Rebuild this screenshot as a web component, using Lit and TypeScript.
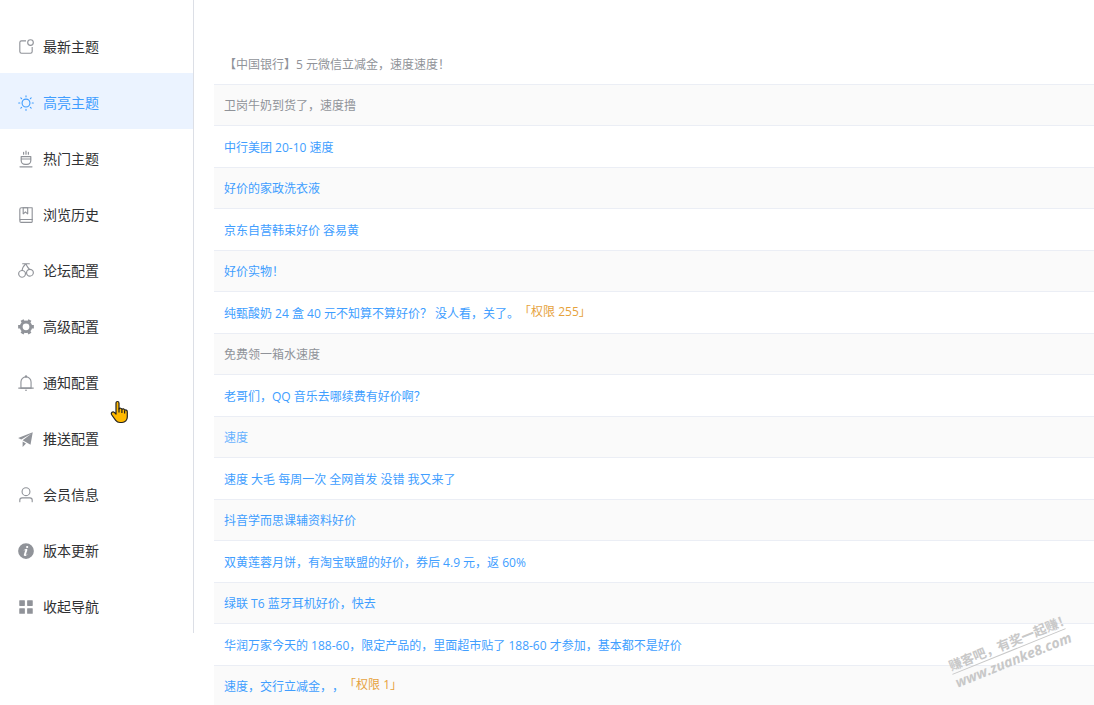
import { LitElement, html, css, svg } from "lit";
import { customElement, property, state } from "lit/decorators.js";
import { classMap } from "lit/directives/class-map.js";

const ICONS: Record<string, string[]> = {
  notification: [
    "M512 128v64H256a64 64 0 0 0-64 64v512a64 64 0 0 0 64 64h512a64 64 0 0 0 64-64V512h64v256a128 128 0 0 1-128 128H256a128 128 0 0 1-128-128V256a128 128 0 0 1 128-128h256z",
    "M768 384a128 128 0 1 0 0-256 128 128 0 0 0 0 256zm0 64a192 192 0 1 1 0-384 192 192 0 0 1 0 384z",
  ],
  sunny: [
    "M512 704a192 192 0 1 0 0-384 192 192 0 0 0 0 384zm0 64a256 256 0 1 1 0-512 256 256 0 0 1 0 512z",
    "M512 64a32 32 0 0 1 32 32v64a32 32 0 0 1-64 0V96a32 32 0 0 1 32-32zm0 768a32 32 0 0 1 32 32v64a32 32 0 1 1-64 0v-64a32 32 0 0 1 32-32z",
    "M195.2 195.2a32 32 0 0 1 45.248 0l45.248 45.248a32 32 0 1 1-45.248 45.248L195.2 240.448a32 32 0 0 1 0-45.248zm543.104 543.104a32 32 0 0 1 45.248 0l45.248 45.248a32 32 0 0 1-45.248 45.248l-45.248-45.248a32 32 0 0 1 0-45.248z",
    "M64 512a32 32 0 0 1 32-32h64a32 32 0 0 1 0 64H96a32 32 0 0 1-32-32zm768 0a32 32 0 0 1 32-32h64a32 32 0 1 1 0 64h-64a32 32 0 0 1-32-32z",
    "M195.2 828.8a32 32 0 0 1 0-45.248l45.248-45.248a32 32 0 0 1 45.248 45.248L240.448 828.8a32 32 0 0 1-45.248 0zM738.304 285.696a32 32 0 0 1 0-45.248l45.248-45.248a32 32 0 0 1 45.248 45.248l-45.248 45.248a32 32 0 0 1-45.248 0z",
  ],
  hot: [
    "M273.067 477.867h477.866V409.6H273.067v68.267zm0 68.266v51.2A187.733 187.733 0 0 0 460.8 785.067h102.4a187.733 187.733 0 0 0 187.733-187.734v-51.2H273.067zm-34.134-204.8h546.134a34.133 34.133 0 0 1 34.133 34.134v221.866a256 256 0 0 1-256 256H460.8a256 256 0 0 1-256-256V375.467a34.133 34.133 0 0 1 34.133-34.134zM512 34.133a34.133 34.133 0 0 1 34.133 34.134v170.666a34.133 34.133 0 0 1-68.266 0V68.267A34.133 34.133 0 0 1 512 34.133zM375.467 102.4a34.133 34.133 0 0 1 34.133 34.133v102.4a34.133 34.133 0 0 1-68.267 0v-102.4a34.133 34.133 0 0 1 34.134-34.133zm273.066 0a34.133 34.133 0 0 1 34.134 34.133v102.4a34.133 34.133 0 1 1-68.267 0v-102.4a34.133 34.133 0 0 1 34.133-34.133zM170.667 921.668h682.666a34.133 34.133 0 1 1 0 68.267H170.667a34.133 34.133 0 1 1 0-68.267z",
  ],
  collection: [
    "M192 736h640V128H256a64 64 0 0 0-64 64v544zm64-672h608a32 32 0 0 1 32 32v672a32 32 0 0 1-32 32H160l-32 57.536V192A128 128 0 0 1 256 64z",
    "M240 800a48 48 0 1 0 0 96h592v-96H240zm0-64h656v160a64 64 0 0 1-64 64H240a112 112 0 0 1 0-224zm144-608v250.88l96-76.8 96 76.8V128H384zm-64-64h320v381.44a32 32 0 0 1-51.968 24.96L480 384l-108.032 86.4A32 32 0 0 1 320 445.44V64z",
  ],
  cherry: [
    "M261.056 449.6c13.824-69.696 34.88-128.96 63.36-177.728 23.744-40.832 61.12-88.64 112.256-143.872H320a32 32 0 0 1 0-64h384a32 32 0 1 1 0 64H554.752c14.912 39.168 41.344 86.592 79.552 141.76 47.36 68.48 84.8 106.752 106.304 114.304a224 224 0 1 1-84.992 14.784c-22.656-22.912-47.04-53.76-73.92-92.608-38.848-56.128-67.008-105.792-84.352-149.312-55.296 58.24-94.528 107.52-117.76 147.2-23.168 39.744-41.088 88.768-53.568 147.072a224.064 224.064 0 1 1-64.96-1.6zM288 832a160 160 0 1 0 0-320 160 160 0 0 0 0 320zm448-64a160 160 0 1 0 0-320 160 160 0 0 0 0 320z",
  ],
  tools: [
    "M764.416 254.72a351.68 351.68 0 0 1 86.336 149.184H960v192.064H850.752a351.68 351.68 0 0 1-86.336 149.312l54.72 94.72-166.272 96-54.592-94.72a352.64 352.64 0 0 1-172.48 0L371.136 936l-166.272-96 54.72-94.72a351.68 351.68 0 0 1-86.336-149.312H64v-192h109.248a351.68 351.68 0 0 1 86.336-149.312L204.8 160l166.208-96h.192l54.656 94.592a352.64 352.64 0 0 1 172.48 0L652.8 64h.128L819.2 160l-54.72 94.72zM704 499.968a192 192 0 1 0-384 0 192 192 0 0 0 384 0z",
  ],
  bell: [
    "M512 64a64 64 0 0 1 64 64v64H448v-64a64 64 0 0 1 64-64z",
    "M256 768h512V448a256 256 0 1 0-512 0v320zm256-640a320 320 0 0 1 320 320v384H192V448a320 320 0 0 1 320-320z",
    "M96 768h832q32 0 32 32t-32 32H96q-32 0-32-32t32-32zm352 128h128a64 64 0 0 1-128 0z",
  ],
  promotion: [
    "m64 448 832-320-128 704-446.08-243.328L832 192 242.816 545.472 64 448zm256 512V657.024L512 768 320 960z",
  ],
  user: [
    "M512 512a192 192 0 1 0 0-384 192 192 0 0 0 0 384zm0 64a256 256 0 1 1 0-512 256 256 0 0 1 0 512zm320 320v-96a96 96 0 0 0-96-96H288a96 96 0 0 0-96 96v96a32 32 0 1 1-64 0v-96a160 160 0 0 1 160-160h448a160 160 0 0 1 160 160v96a32 32 0 1 1-64 0z",
  ],
  info: [
    "M512 64a448 448 0 1 1 0 896.064A448 448 0 0 1 512 64zm67.2 275.072c33.28 0 60.288-23.104 60.288-57.344s-27.072-57.344-60.288-57.344c-33.28 0-60.16 23.104-60.16 57.344s26.88 57.344 60.16 57.344zM590.912 699.2c0-6.848 2.368-24.64 1.024-34.752l-52.608 60.544c-10.88 11.456-24.512 19.392-30.912 17.28a12.992 12.992 0 0 1-8.256-14.72l87.68-276.992c7.168-35.136-12.544-67.2-54.336-71.296-44.096 0-108.992 44.736-148.48 101.504 0 6.784-1.28 23.68.064 33.792l52.544-60.608c10.88-11.328 23.552-19.328 29.952-17.152a12.8 12.8 0 0 1 7.808 16.128L388.48 728.576c-10.048 32.256 8.96 63.872 55.04 71.04 67.84 0 107.904-43.648 147.456-100.416z",
  ],
  menu: [
    "M160 448a32 32 0 0 1-32-32V160a32 32 0 0 1 32-32h256a32 32 0 0 1 32 32v256a32 32 0 0 1-32 32H160z",
    "M608 448a32 32 0 0 1-32-32V160a32 32 0 0 1 32-32h256a32 32 0 0 1 32 32v256a32 32 0 0 1-32 32H608z",
    "M160 896a32 32 0 0 1-32-32V608a32 32 0 0 1 32-32h256a32 32 0 0 1 32 32v256a32 32 0 0 1-32 32H160z",
    "M608 896a32 32 0 0 1-32-32V608a32 32 0 0 1 32-32h256a32 32 0 0 1 32 32v256a32 32 0 0 1-32 32H608z",
  ],
};

const NAV: { icon: string; label: string }[] = [
  { icon: "notification", label: "最新主题" },
  { icon: "sunny", label: "高亮主题" },
  { icon: "hot", label: "热门主题" },
  { icon: "collection", label: "浏览历史" },
  { icon: "cherry", label: "论坛配置" },
  { icon: "tools", label: "高级配置" },
  { icon: "bell", label: "通知配置" },
  { icon: "promotion", label: "推送配置" },
  { icon: "user", label: "会员信息" },
  { icon: "info", label: "版本更新" },
  { icon: "menu", label: "收起导航" },
];

interface Topic {
  title: string;
  tone?: "read" | "soft";
  tag?: string;
}

const TOPICS: Topic[] = [
  { title: "【中国银行】5 元微信立减金，速度速度！", tone: "read" },
  { title: "卫岗牛奶到货了，速度撸", tone: "read" },
  { title: "中行美团 20-10 速度" },
  { title: "好价的家政洗衣液" },
  { title: "京东自营韩束好价 容易黄" },
  { title: "好价实物！" },
  { title: "纯甄酸奶 24 盒 40 元不知算不算好价？ 没人看，关了。", tag: "「权限 255」" },
  { title: "免费领一箱水速度", tone: "read" },
  { title: "老哥们，QQ 音乐去哪续费有好价啊？" },
  { title: "速度", tone: "soft" },
  { title: "速度 大毛 每周一次 全网首发 没错 我又来了" },
  { title: "抖音学而思课辅资料好价" },
  { title: "双黄莲蓉月饼，有淘宝联盟的好价，券后 4.9 元，返 60%" },
  { title: "绿联 T6 蓝牙耳机好价，快去" },
  { title: "华润万家今天的 188-60，限定产品的，里面超市贴了 188-60 才参加，基本都不是好价" },
  { title: "速度，交行立减金，，", tag: "「权限 1」" },
];

@customElement("side-nav")
class SideNav extends LitElement {
  @state() private active = 1;

  static styles = css`
    :host {
      display: block;
    }
    .menu {
      list-style: none;
      margin: 0;
      padding: 17px 0 0;
      border-right: 1px solid #dcdfe6;
    }
    .item {
      display: flex;
      align-items: center;
      gap: 8px;
      box-sizing: border-box;
      height: 56px;
      padding: 4px 17px 0;
      color: #303133;
      font-size: 14px;
      line-height: 20px;
      text-decoration: none;
    }
    .icon {
      flex: none;
      width: 18px;
      height: 18px;
      fill: #909399;
    }
    .label {
      padding-bottom: 2px;
    }
    .active {
      background: #ebf3ff;
      color: #409eff;
    }
    .active .icon {
      fill: #409eff;
    }
  `;

  render() {
    return html`<nav aria-label="导航">
      <ul class="menu">
        ${NAV.map(
          (n, i) => html`<li>
            <a
              href="#"
              class=${classMap({ item: true, active: i === this.active })}
              @click=${(e: Event) => {
                e.preventDefault();
                this.active = i;
              }}
            >
              <svg class="icon" viewBox="0 0 1024 1024" aria-hidden="true">
                ${ICONS[n.icon].map((d) => svg`<path d=${d}></path>`)}
              </svg>
              <span class="label">${n.label}</span>
            </a>
          </li>`
        )}
      </ul>
    </nav>`;
  }
}

@customElement("topic-table")
class TopicTable extends LitElement {
  @property({ attribute: false }) topics: Topic[] = [];

  static styles = css`
    :host {
      display: block;
      font-family: "Open Sans", "Noto Sans CJK SC", sans-serif;
    }
    .table {
      width: 100%;
      border-collapse: separate;
      border-spacing: 0;
      font-size: 12px;
      line-height: 20px;
    }
    .cell {
      padding: 12px 10px 9px;
      border-bottom: 1px solid #ebeef5;
      white-space: nowrap;
    }
    .row:nth-child(even) .cell {
      padding-top: 11px;
      background: #fafafa;
    }
    .line {
      display: flex;
      align-items: flex-start;
      height: 20px;
    }
    .link {
      color: #409eff;
      text-decoration: none;
    }
    .read {
      color: #909399;
    }
    .soft {
      color: #66b1ff;
    }
    .tag {
      color: #e6a23c;
      line-height: 16px;
    }
  `;

  render() {
    return html`<table class="table">
      <tbody>
        ${this.topics.map(
          (t) => html`<tr class="row">
            <td class="cell">
              <div class="line">
                <a
                  href="#"
                  class=${classMap({
                    link: true,
                    read: t.tone === "read",
                    soft: t.tone === "soft",
                  })}
                  >${t.title}</a
                >${t.tag ? html`<span class="tag">${t.tag}</span>` : null}
              </div>
            </td>
          </tr>`
        )}
      </tbody>
    </table>`;
  }
}

@customElement("app-root")
class AppRoot extends LitElement {
  static styles = css`
    :host {
      display: grid;
      grid-template-columns: 194px minmax(0, 1fr);
      align-items: start;
      position: relative;
      height: 100vh;
      overflow: hidden;
      background: #fff;
      font-family: "Noto Sans CJK SC", sans-serif;
      text-spacing-trim: space-all;
    }
    .content {
      padding: 43px 0 0 20px;
    }
    .cursor {
      position: absolute;
      left: 110px;
      top: 400px;
      width: 19px;
      height: 24px;
      pointer-events: none;
    }
    .watermark {
      position: absolute;
      right: 24px;
      bottom: 36px;
      width: 122px;
      color: #c8c8c8;
      font-weight: 700;
      white-space: nowrap;
      transform: rotate(-22deg);
      pointer-events: none;
    }
    .slogan {
      font-size: 13px;
      line-height: 17px;
      border-bottom: 1px solid #c8c8c8;
    }
    .site {
      font-family: "Open Sans", sans-serif;
      font-style: italic;
      font-size: 14px;
      line-height: 17px;
    }
  `;

  render() {
    return html`
      <side-nav></side-nav>
      <main class="content">
        <topic-table .topics=${TOPICS}></topic-table>
      </main>
      <svg class="cursor" viewBox="0 0 19 24" aria-hidden="true">
        <path
          d="M6 14V3.2C6 .9 9 .9 9 3.2V9c.6-1.200 2.600-1 2.900.4.800-1 2.500-.6 2.700.8 1-.7 2.700 0 2.700 1.500v5.300c0 3-2.200 5.500-5.300 5.500H10c-2 0-3.200-.7-4.300-2.200L1.500 14.500C.6 12.600 2.800 11 4.300 12.400z"
          fill="#ffb900"
          stroke="#222"
          stroke-width="1.200"
          stroke-linejoin="round"
        ></path>
        <path d="M9 8.500v4M11.900 9.500v3.500M14.600 10.500v3" stroke="#222" stroke-width="1.200" fill="none"></path>
      </svg>
      <div class="watermark" aria-hidden="true">
        <div class="slogan">赚客吧，有奖一起赚！</div>
        <div class="site">www.zuanke8.com</div>
      </div>
    `;
  }
}
